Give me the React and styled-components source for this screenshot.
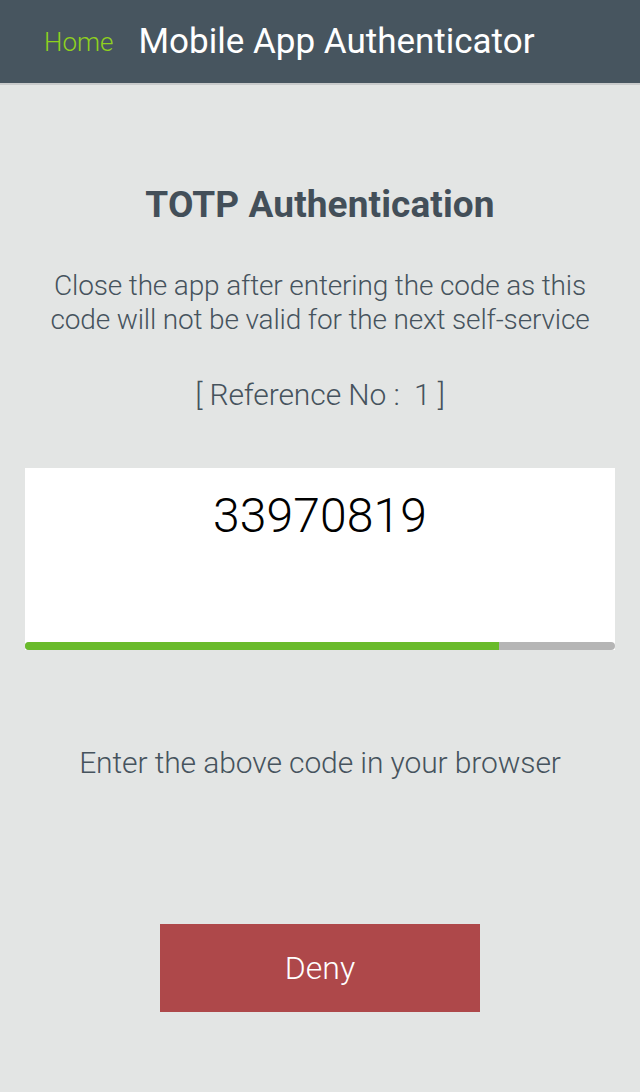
import React from "react";
import styled, { createGlobalStyle } from "styled-components";

const Global = createGlobalStyle`
  html, body { margin: 0; padding: 0; }
  body {
    background: #e3e5e4;
    font-family: Roboto, "Liberation Sans", sans-serif;
  }
`;

const Page = styled.div`
  width: 640px;
  min-height: 1092px;
  background: #e3e5e4;
  display: flex;
  flex-direction: column;
`;

const Header = styled.header`
  height: 83px;
  background: #47555f;
  border-bottom: 2px solid #c9cbcb;
  display: flex;
  align-items: center;
  padding-left: 44px;
  gap: 25px;
  box-sizing: content-box;
`;

const HomeLink = styled.a`
  color: #8fd11e;
  font-size: 26px;
  font-weight: 300;
  text-decoration: none;
`;

const HeaderTitle = styled.h1`
  margin: 0;
  color: #ffffff;
  font-size: 35px;
  font-weight: 400;
`;

const Main = styled.main`
  display: flex;
  flex-direction: column;
  align-items: center;
  padding: 0 24px;
`;

const Title = styled.h2`
  margin: 100px 0 0;
  height: 40px;
  line-height: 40px;
  font-size: 37px;
  font-weight: 700;
  color: #434f59;
  letter-spacing: 0.1px;
`;

const Text = styled.p`
  margin: ${(p) => p.$mt}px 0 0;
  font-size: ${(p) => p.$size || 28}px;
  line-height: 34px;
  font-weight: 300;
  color: #46535d;
  text-align: center;
  letter-spacing: ${(p) => p.$ls || 0}px;
  white-space: nowrap;
`;

const CodeCard = styled.div`
  margin-top: 56px;
  width: 590px;
  height: 182px;
  background: #ffffff;
  display: flex;
  flex-direction: column;
  align-items: center;
  justify-content: space-between;
`;

const Code = styled.div`
  margin-top: 20px;
  font-size: 48px;
  font-weight: 300;
  color: #000000;
  line-height: 56px;
  letter-spacing: 0.1px;
`;

const Track = styled.div`
  width: 100%;
  height: 8px;
  background: #b5b5b5;
  border-radius: 4px;
  overflow: hidden;
`;

const Fill = styled.div`
  height: 100%;
  background: #6abb2b;
`;

const DenyButton = styled.button`
  margin-top: 144px;
  width: 320px;
  height: 88px;
  border: none;
  background: #ae484a;
  color: #ffffff;
  font-family: inherit;
  font-size: 32px;
  font-weight: 300;
  cursor: pointer;
`;

export default function App() {
  const progress = 474 / 590;
  return (
    <>
      <Global />
      <Page>
        <Header>
          <HomeLink href="#">Home</HomeLink>
          <HeaderTitle>Mobile App Authenticator</HeaderTitle>
        </Header>
        <Main>
          <Title>TOTP Authentication</Title>
          <Text $mt={44} $ls={-0.15}>
            Close the app after entering the code as this
            <br />
            code will not be valid for the next self-service
          </Text>
          <Text $mt={41} $size={30} $ls={-0.1}>[ Reference No :&nbsp; 1 ]</Text>
          <CodeCard>
            <Code>33970819</Code>
            <Track>
              <Fill style={{ width: `${progress * 100}%` }} />
            </Track>
          </CodeCard>
          <Text $mt={96} $size={30} $ls={-0.1}>Enter the above code in your browser</Text>
          <DenyButton>Deny</DenyButton>
        </Main>
      </Page>
    </>
  );
}
